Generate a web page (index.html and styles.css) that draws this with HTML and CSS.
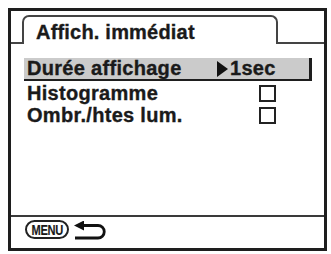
FILE: index.html
```html
<!DOCTYPE html>
<html>
<head>
<meta charset="utf-8">
<link rel="stylesheet" href="styles.css">
</head>
<body>
<div class="frame">
  <div class="header">
    <div class="hl-left"></div>
    <div class="tab">Affich. immédiat</div>
    <div class="hl-right"></div>
  </div>
  <div class="list">
    <div class="row sel">
      <span class="label">Durée affichage</span>
      <span class="value">
        <svg class="tri" width="11" height="16" viewBox="0 0 11 16"><polygon points="0,0 11,8 0,16" fill="#111"/></svg>
        <span class="val-text">1sec</span>
      </span>
    </div>
    <div class="row">
      <span class="label">Histogramme</span>
      <span class="value"><span class="box"></span></span>
    </div>
    <div class="row">
      <span class="label">Ombr./htes lum.</span>
      <span class="value"><span class="box"></span></span>
    </div>
  </div>
  <div class="footer">
    <span class="menu"><span class="menu-text">MENU</span></span>
    <svg class="back" width="32" height="19" viewBox="0 0 32 19">
      <polygon points="0,4.5 10,-0.5 10,9.5" fill="#111"/>
      <path d="M8 4.5 H24 A6.25 6.25 0 0 1 24 17 H1" fill="none" stroke="#111" stroke-width="2.8"/>
    </svg>
  </div>
</div>
</body>
</html>
```
FILE: styles.css
```css
html, body {
  margin: 0;
  padding: 0;
  background: #fff;
}
body {
  font-family: "Liberation Sans", Arial, sans-serif;
  font-weight: bold;
  color: #1a1a1a;
  -webkit-text-stroke: 0.35px #1a1a1a;
}
.frame {
  margin: 8px 0 0 8px;
  width: 313px;
  height: 237px;
  border: 3px solid #1e1e1e;
  display: flex;
  flex-direction: column;
}
.header {
  display: flex;
  height: 33px;
  flex: none;
}
.hl-left {
  width: 11px;
  border-bottom: 2px solid #444;
}
.hl-right {
  flex: 1;
  border-bottom: 2px solid #444;
}
.tab {
  margin-top: 4px;
  width: 256px;
  box-sizing: border-box;
  border: 2px solid #444;
  border-bottom: none;
  border-radius: 7px 7px 0 0;
  font-size: 20px;
  letter-spacing: 0.2px;
  padding: 2px 0 0 12px;
  line-height: 27px;
}
.list {
  flex: 1;
  padding: 14px 12px 0 13px;
}
.row {
  display: flex;
  align-items: center;
  height: 21px;
  margin-bottom: 1px;
  font-size: 20px;
  letter-spacing: 0.3px;
}
.row.sel {
  height: 21px;
  background: #cbcbcb;
  border-bottom: 2px solid #1e1e1e;
  border-right: 3px solid #1e1e1e;
  margin-bottom: 2px;
}
.label {
  flex: 1;
  padding-left: 3px;
}
.value {
  width: 92px;
  display: flex;
  align-items: center;
}
.tri {
  display: block;
  margin-right: 2px;
}
.box {
  display: block;
  margin-left: 39px;
  width: 13px;
  height: 13px;
  border: 2px solid #222;
}
.footer {
  flex: none;
  height: 33px;
  border-top: 2px solid #3a3a3a;
  display: flex;
  align-items: flex-start;
  padding: 3px 0 0 14px;
  box-sizing: border-box;
}
.menu {
  display: flex;
  justify-content: center;
  align-items: center;
  width: 44px;
  height: 19px;
  box-sizing: border-box;
  border: 2px solid #222;
  border-radius: 10px;
  overflow: hidden;
}
.menu-text {
  font-size: 15px;
  line-height: 15px;
  letter-spacing: -0.4px;
  -webkit-text-stroke: 0.15px #1a1a1a;
  transform: scaleX(0.74);
}
.back {
  display: block;
  margin-left: 5px;
  margin-top: 1px;
}
```
